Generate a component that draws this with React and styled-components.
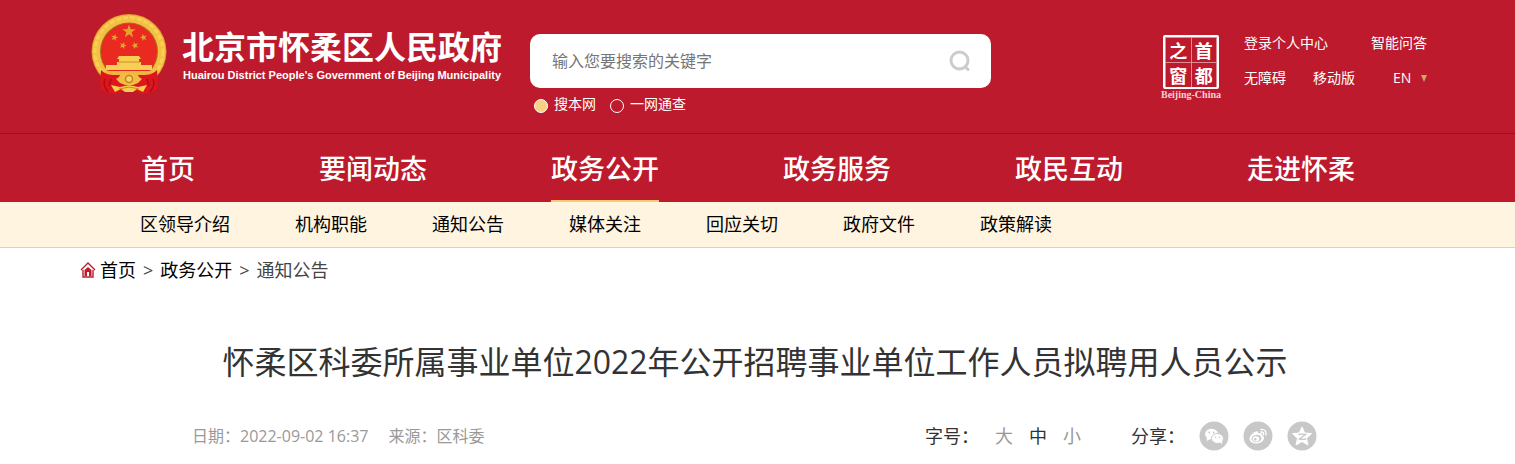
import React from "react";
import styled, { createGlobalStyle } from "styled-components";

const GlobalStyle = createGlobalStyle`
  * { box-sizing: border-box; }
  body {
    margin: 0;
    background: #fff;
    color: #000;
    font-family: "Open Sans", "Noto Sans CJK SC", sans-serif;
    font-size: 18px;
  }
  a { color: inherit; text-decoration: none; }
  h1 { margin: 0; font-weight: 400; }
`;

const Header = styled.header`
  background: #bd1b2d;
  color: #fff;
`;

const TopBar = styled.div`
  display: flex;
  align-items: flex-start;
  min-height: 133px;
  padding: 0 88px 0 91px;
`;

const Brand = styled.a`
  display: flex;
  gap: 15px;
  padding-top: 14px;
`;

const BrandText = styled.span`
  display: flex;
  flex-direction: column;
  width: 320px;
  padding-top: 11px;
  white-space: nowrap;
`;

const BrandName = styled.span`
  font: 700 32px/40px "Noto Sans CJK SC", sans-serif;
`;

const BrandEnglish = styled.span`
  padding-left: 1px;
  font: 700 11px/20px "Liberation Sans", sans-serif;
`;

const Search = styled.form`
  flex: 0 1 461px;
  margin: 34px 0 0 28px;
`;

const SearchBox = styled.div`
  display: flex;
  align-items: center;
  height: 54px;
  padding: 0 20px 0 22px;
  border-radius: 10px;
  background: #fff;
`;

const SearchInput = styled.input`
  flex: 1;
  min-width: 0;
  padding: 0;
  border: 0;
  outline: 0;
  background: none;
  font: 16px/24px "Open Sans", "Noto Sans CJK SC", sans-serif;
  &::placeholder { color: #757575; opacity: 1; }
`;

const IconButton = styled.button`
  display: flex;
  padding: 0;
  border: 0;
  background: none;
  cursor: pointer;
`;

const Scopes = styled.div`
  display: flex;
  gap: 14px;
  padding: 6px 0 0 4px;
`;

const Scope = styled.label`
  display: flex;
  align-items: center;
  gap: 6px;
  font-size: 14px;
  line-height: 20px;
`;

const Radio = styled.input`
  appearance: none;
  width: 14px;
  height: 14px;
  margin: 4px 0 0;
  border: 1px solid #fff;
  border-radius: 50%;
  &:checked { background: #f6d285; }
`;

const Seal = styled.a`
  display: flex;
  flex-direction: column;
  align-items: center;
  width: 62px;
  margin: 35px 22px 0 auto;
`;

const SealGrid = styled.span`
  display: grid;
  grid-template-columns: 1fr 1fr;
  gap: 1px;
  width: 56px;
  height: 54px;
  padding: 1px;
  border: 2px solid #fff;
  border-radius: 2px;
  background: #e08c95;
`;

const SealChar = styled.span`
  background: #bd1b2d;
  font: 700 18px/24px "Noto Sans CJK SC", sans-serif;
  text-align: center;
`;

const SealCaption = styled.span`
  color: #f3d3d7;
  font: 700 10px/12px "Liberation Serif", serif;
  white-space: nowrap;
`;

const Tools = styled.nav`
  display: flex;
  flex-direction: column;
  gap: 15px;
  flex: 0 0 183px;
  padding-top: 33px;
  font-size: 14px;
  line-height: 20px;
`;

const ToolRow = styled.div`
  display: flex;
  justify-content: space-between;
`;

const ToolGroup = styled.div`
  display: flex;
  gap: 27px;
`;

const Language = styled.label`
  display: flex;
  align-items: center;
  gap: 8px;
`;

const LanguageSelect = styled.select`
  appearance: none;
  width: 20px;
  padding: 0;
  border: 0;
  background: none;
  color: inherit;
  font: 14px/20px "Open Sans", sans-serif;
`;

const MainNav = styled.nav`
  display: flex;
  gap: 124px;
  padding: 0 80px 0 141px;
  border-top: 1px solid #8c1522;
  white-space: nowrap;
`;

const MainLink = styled.a`
  height: 68px;
  border-bottom: 2px solid ${(p) => (p.$active ? "#f9cb77" : "transparent")};
  font-size: 27px;
  font-weight: 500;
  line-height: 70px;
`;

const SubNav = styled.nav`
  display: flex;
  gap: 65px;
  padding: 0 80px 0 140px;
  border-bottom: 1px solid #f6cf87;
  background: #fff4e0;
  line-height: 45px;
  white-space: nowrap;
`;

const Crumbs = styled.nav`
  display: flex;
  align-items: center;
  gap: 7px;
  padding: 8px 80px 0;
  line-height: 28px;
`;

const HomeLink = styled.a`
  display: flex;
  align-items: center;
  gap: 4px;
`;

const CrumbText = styled.span`
  color: #444;
`;

const Article = styled.article`
  padding: 0 190px;
`;

const Title = styled.h1`
  margin: 54px -35px 0 -40px;
  color: #333;
  font-size: 32px;
  line-height: 48px;
  text-align: center;
`;

const Meta = styled.div`
  display: flex;
  align-items: center;
  justify-content: space-between;
  padding: 35px 8px 12px 2px;
  color: #333;
  white-space: nowrap;
`;

const Facts = styled.div`
  display: flex;
  gap: 20px;
  color: #999;
  font-size: 16px;
  line-height: 28px;
`;

const Controls = styled.div`
  display: flex;
  align-items: center;
  gap: 50px;
`;

const ControlSet = styled.div`
  display: flex;
  align-items: center;
  gap: ${(p) => p.$gap}px;
`;

const SizeButton = styled.button`
  padding: 0;
  border: 0;
  background: none;
  color: ${(p) => (p.$active ? "#333" : "#999")};
  font: 18px/28px "Open Sans", "Noto Sans CJK SC", sans-serif;
  cursor: pointer;
`;

const ControlLabel = styled.span`
  width: 54px;
  line-height: 28px;
`;

function Star({ x, y, r, turn = 0 }) {
  const points = Array.from({ length: 10 }, (_, i) => {
    const radius = i % 2 ? r * 0.4 : r;
    const angle = ((i * 36 - 90 + turn) * Math.PI) / 180;
    return `${x + radius * Math.cos(angle)},${y + radius * Math.sin(angle)}`;
  }).join(" ");
  return <polygon points={points} fill="#e0a52f" />;
}

function Emblem() {
  return (
    <svg width="76" height="80" viewBox="0 0 76 80" aria-hidden="true">
      <circle cx="38" cy="37.500" r="37.500" fill="#e0a02a" />
      <circle cx="38" cy="37.500" r="32.500" fill="none" stroke="#f3c044" strokeWidth="8" />
      <circle cx="38" cy="37.500" r="34" fill="none" stroke="#fbd65c" strokeWidth="3" strokeDasharray="5 2" opacity=".7" />
      <circle cx="38" cy="37.500" r="29" fill="#a8701c" />
      <circle cx="38" cy="37.500" r="28" fill="#ea2a20" />
      <Star x={38} y={17.5} r={7} />
      <Star x={23.5} y={23.5} r={3.8} turn={15} />
      <Star x={52.5} y={23.5} r={3.8} turn={-15} />
      <Star x={32} y={31.5} r={3.8} turn={20} />
      <Star x={44} y={31.5} r={3.8} turn={-20} />
      <path d="M28 42h20l2 3H26zM28 45h20v3h2v3h-24v-3h2zM15 51h46v5H15z" fill="#f8cf55" />
      <path d="M27 48h22" stroke="#d48a28" />
      <path d="M14 57h48l-3 4H17z" fill="#efb53c" />
      <path d="M10 56c4 4 8 5 14 5h28c6 0 10-1 14-5l1 12-1 7-6 4-9 1-13-5-13 5-9-1-6-4-1-7z" fill="#dc161c" />
      <path d="M14 65c-2 4-1 8 3 13M62 65c2 4 1 8-3 13M20 65l-2 7M56 65l2 7" stroke="#ab0f17" strokeWidth="1.500" fill="none" />
      <path d="M38 58l4 1 4 0 2 4 3 2-4 4-5 2h-8l-5-2-4-4 3-2 2-4 4 0z" fill="#f3bb43" />
      <circle cx="38" cy="65" r="3.500" fill="#f9d466" stroke="#c8811f" strokeWidth="1.500" />
      <path d="M20 71l9 2 9-2 9 2 9-2-4 7-6-3-4 3h-8l-4-3-6 3z" fill="#f7cc4e" />
      <path d="M28 75l10-2 10 2" fill="none" stroke="#cc8a22" />
    </svg>
  );
}

function SearchIcon() {
  return (
    <svg width="22" height="22" viewBox="0 0 22 22" fill="none" stroke="#ccc" strokeWidth="3" strokeLinecap="round">
      <circle cx="10.500" cy="10.500" r="8.500" />
      <path d="M16.500 17l2.500 2.500" />
    </svg>
  );
}

function Caret() {
  return (
    <svg width="6" height="7" viewBox="0 0 6 7" aria-hidden="true">
      <path d="M0 0h6L3 7z" fill="#d3a468" />
    </svg>
  );
}

function HomeIcon() {
  return (
    <svg width="16" height="16" viewBox="0 0 16 16" aria-hidden="true">
      <path d="M1 8L8 1l7 7M3 8v7h10V8" fill="none" stroke="#bd1b2d" strokeWidth="1.400" />
      <path d="M4.500 14V8L8 5l3.500 3v6H9v-4H7v4z" fill="#bd1b2d" />
    </svg>
  );
}

function WechatIcon() {
  return (
    <svg width="30" height="30" viewBox="0 0 30 30">
      <circle cx="15" cy="15" r="14.500" fill="#c8c8c8" />
      <ellipse cx="12.500" cy="13" rx="6.500" ry="5.300" fill="#fff" />
      <path d="M8 16l-.5 4 4-2z" fill="#fff" />
      <ellipse cx="18.500" cy="17.500" rx="6" ry="5" fill="#fff" stroke="#c8c8c8" />
      <path d="M21 21l2 2.500.3-3.500z" fill="#fff" />
      <g fill="#c8c8c8">
        <circle cx="10.300" cy="11.500" r=".9" />
        <circle cx="14.700" cy="11.500" r=".9" />
        <circle cx="16.500" cy="16.200" r=".8" />
        <circle cx="20.500" cy="16.200" r=".8" />
      </g>
    </svg>
  );
}

function WeiboIcon() {
  return (
    <svg width="30" height="30" viewBox="0 0 30 30">
      <circle cx="15" cy="15" r="14.500" fill="#c8c8c8" />
      <path d="M13 10.500c1.500-.6 2.500.2 2 2 2.500-1 4.500-.4 3.800 1.700 1.500.5 2.200 1.500 2.200 2.800 0 3-3.500 5.500-7.500 5.500-4 0-7-2-7-4.800 0-2.700 3.500-6.300 6.500-7.200z" fill="#fff" />
      <ellipse cx="13.500" cy="17.500" rx="5" ry="3.600" fill="#c8c8c8" transform="rotate(-10 13.500 17.500)" />
      <ellipse cx="13" cy="17.800" rx="3.300" ry="2.600" fill="#fff" />
      <circle cx="12.300" cy="18.200" r="1.200" fill="#c8c8c8" />
      <path d="M18 8.500c3.500-.7 6 2 5 5.500M18 11c1.800-.3 3 1 2.500 2.700" fill="none" stroke="#fff" strokeWidth="1.400" strokeLinecap="round" />
    </svg>
  );
}

function QzoneIcon() {
  return (
    <svg width="30" height="30" viewBox="0 0 30 30">
      <circle cx="15" cy="15" r="14.500" fill="#c8c8c8" />
      <path d="M15 6l2.700 6 6.800.6-5 4.600 1.500 6.800-6-3.500L9 24l1.500-6.800-5-4.600 6.800-.6z" fill="#fff" stroke="#fff" strokeLinejoin="round" />
      <path d="M11.500 13.500c2.500-.5 4.500-.5 7 0l-6 4.500c2.500.5 4.500.5 6.500 0" fill="none" stroke="#c8c8c8" strokeWidth="1.300" />
    </svg>
  );
}

const mainLinks = ["首页", "要闻动态", "政务公开", "政务服务", "政民互动", "走进怀柔"];
const subLinks = ["区领导介绍", "机构职能", "通知公告", "媒体关注", "回应关切", "政府文件", "政策解读"];
const textSizes = ["大", "中", "小"];
const shares = [
  ["微信", WechatIcon],
  ["微博", WeiboIcon],
  ["QQ空间", QzoneIcon],
];

export default function App() {
  return (
    <>
      <GlobalStyle />
      <Header>
        <TopBar>
          <Brand href="#">
            <Emblem />
            <BrandText>
              <BrandName>北京市怀柔区人民政府</BrandName>
              <BrandEnglish>Huairou District People's Government of Beijing Municipality</BrandEnglish>
            </BrandText>
          </Brand>
          <Search onSubmit={(e) => e.preventDefault()}>
            <SearchBox>
              <SearchInput type="text" aria-label="搜索" placeholder="输入您要搜索的关键字" />
              <IconButton type="submit" aria-label="搜索"><SearchIcon /></IconButton>
            </SearchBox>
            <Scopes>
              <Scope><Radio type="radio" name="scope" defaultChecked />搜本网</Scope>
              <Scope><Radio type="radio" name="scope" />一网通查</Scope>
            </Scopes>
          </Search>
          <Seal href="#">
            <SealGrid>
              {["之", "首", "窗", "都"].map((c) => <SealChar key={c}>{c}</SealChar>)}
            </SealGrid>
            <SealCaption>Beijing-China</SealCaption>
          </Seal>
          <Tools>
            <ToolRow>
              <a href="#">登录个人中心</a>
              <a href="#">智能问答</a>
            </ToolRow>
            <ToolRow>
              <ToolGroup>
                <a href="#">无障碍</a>
                <a href="#">移动版</a>
              </ToolGroup>
              <Language>
                <LanguageSelect aria-label="Language"><option>EN</option></LanguageSelect>
                <Caret />
              </Language>
            </ToolRow>
          </Tools>
        </TopBar>
        <MainNav>
          {mainLinks.map((text) => (
            <MainLink key={text} href="#" $active={text === "政务公开"}>{text}</MainLink>
          ))}
        </MainNav>
      </Header>
      <SubNav>
        {subLinks.map((text) => <a key={text} href="#">{text}</a>)}
      </SubNav>
      <Crumbs>
        <HomeLink href="#"><HomeIcon />首页</HomeLink>
        <CrumbText>&gt;</CrumbText>
        <a href="#">政务公开</a>
        <CrumbText>&gt;</CrumbText>
        <CrumbText>通知公告</CrumbText>
      </Crumbs>
      <Article>
        <Title>怀柔区科委所属事业单位2022年公开招聘事业单位工作人员拟聘用人员公示</Title>
        <Meta>
          <Facts>
            <span>日期：2022-09-02 16:37</span>
            <span>来源：区科委</span>
          </Facts>
          <Controls>
            <ControlSet $gap={16}>
              <ControlLabel>字号：</ControlLabel>
              {textSizes.map((text) => (
                <SizeButton key={text} type="button" $active={text === "中"}>{text}</SizeButton>
              ))}
            </ControlSet>
            <ControlSet $gap={14}>
              <ControlLabel>分享：</ControlLabel>
              {shares.map(([name, Icon]) => (
                <IconButton key={name} type="button" aria-label={name}><Icon /></IconButton>
              ))}
            </ControlSet>
          </Controls>
        </Meta>
      </Article>
    </>
  );
}
